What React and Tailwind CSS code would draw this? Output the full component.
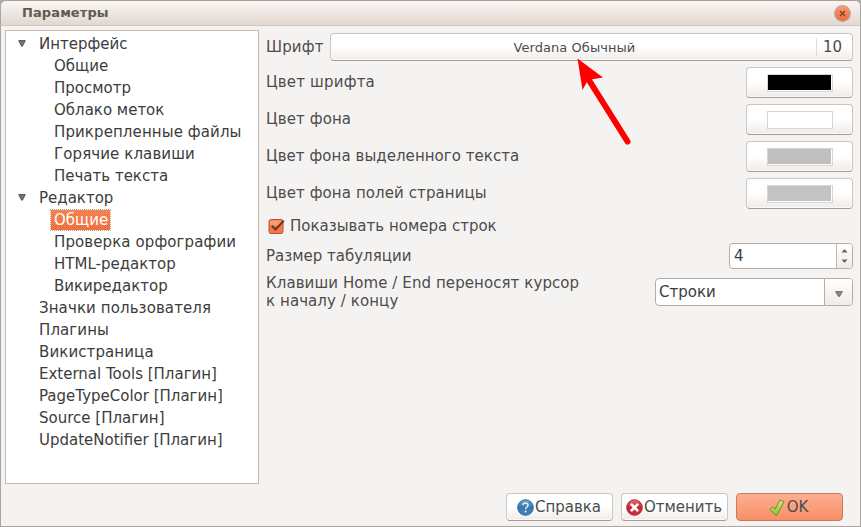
import React from 'react';

const TREE = [
  { label: 'Интерфейс', level: 0, open: true },
  { label: 'Общие', level: 1 },
  { label: 'Просмотр', level: 1 },
  { label: 'Облако меток', level: 1 },
  { label: 'Прикрепленные файлы', level: 1, wide: true },
  { label: 'Горячие клавиши', level: 1, wide: true },
  { label: 'Печать текста', level: 1 },
  { label: 'Редактор', level: 0, open: true },
  { label: 'Общие', level: 1, selected: true },
  { label: 'Проверка орфографии', level: 1, wide: true },
  { label: 'HTML-редактор', level: 1 },
  { label: 'Викиредактор', level: 1 },
  { label: 'Значки пользователя', level: 0, wide: true },
  { label: 'Плагины', level: 0, wide: true },
  { label: 'Викистраница', level: 0, wide: true },
  { label: 'External Tools [Плагин]', level: 0 },
  { label: 'PageTypeColor [Плагин]', level: 0 },
  { label: 'Source [Плагин]', level: 0 },
  { label: 'UpdateNotifier [Плагин]', level: 0 },
];

const COLORS = [
  { label: 'Цвет шрифта', fill: 'bg-black', tracking: 'tracking-[0.18px]' },
  { label: 'Цвет фона', fill: 'bg-white', tracking: 'tracking-[0.1px]' },
  { label: 'Цвет фона выделенного текста', fill: 'bg-[#c0c0c0]', tracking: 'tracking-[0.05px]' },
  { label: 'Цвет фона полей страницы', fill: 'bg-[#c3c3c3]', tracking: 'tracking-[0.09px]' },
];

const BTN =
  'rounded-[4px] border border-[#cdc6c0] border-b-[#a99c93] bg-linear-to-b from-white from-50% to-[#efebe8] shadow-[inset_0_0_0_1px_rgba(255,255,255,0.7)]';

function Triangle({ className, fill = '#777' }) {
  return (
    <svg className={className} viewBox="0 0 8 7">
      <path d="M0.7 0.6H7.3L4.4 6.2H3.6Z" fill={fill} stroke="#4a4a4a" strokeWidth="0.9" />
    </svg>
  );
}

function TreeRow({ label, level, open, selected, wide }) {
  return (
    <div className="flex h-[22px] items-center">
      <div className={`flex shrink-0 ${level ? 'w-[45px]' : 'w-[30px]'} pb-[2px] pl-[12px]`}>
        {open && <Triangle className="h-[7px] w-[8px]" />}
      </div>
      <span
        className={
          selected
            ? '-ml-px flex h-[22px] items-center border border-dotted border-[#c9a08b] bg-linear-to-b from-[#f5834f] to-[#ee7040] bg-clip-padding pl-[3px] pr-[2px] text-white'
            : `pl-[3px] text-[#3c3c3c] ${wide ? 'tracking-[0.1px]' : ''}`
        }
      >
        {label}
      </span>
    </div>
  );
}

function ColorRow({ label, fill, tracking }) {
  return (
    <div className="flex h-[31px] items-center justify-between">
      <span className={`pb-[2px] ${tracking}`}>{label}</span>
      <div className={`flex h-[31px] w-[107px] items-center justify-center ${BTN}`}>
        <div className="h-[18px] w-[66px] border border-[#dcd5ce] bg-white pb-px pr-px">
          <div className={`h-full w-full ${fill}`} />
        </div>
      </div>
    </div>
  );
}

function HelpIcon() {
  return (
    <svg className="h-[17px] w-[17px]" viewBox="0 0 17 17">
      <defs>
        <linearGradient id="help" x1="0" y1="0" x2="0" y2="1">
          <stop offset="0" stopColor="#6ea6d6" />
          <stop offset="0.5" stopColor="#3677b0" />
          <stop offset="1" stopColor="#3d86bd" />
        </linearGradient>
      </defs>
      <circle cx="8.5" cy="8.5" r="7.8" fill="url(#help)" stroke="#2a5f92" strokeWidth="0.9" />
      <path d="M6 6.1C6.1 3.4 11.1 3.4 11 6.2C10.9 8 8.6 8 8.6 10.2" fill="none" stroke="#e8f0f8" strokeWidth="1.5" />
      <circle cx="8.6" cy="12.5" r="1" fill="#e8f0f8" />
    </svg>
  );
}

function CancelIcon() {
  return (
    <svg className="h-[17px] w-[17px]" viewBox="0 0 17 17">
      <defs>
        <linearGradient id="cancel" x1="0" y1="0" x2="0" y2="1">
          <stop offset="0" stopColor="#ea6d6d" />
          <stop offset="0.5" stopColor="#cc2430" />
          <stop offset="1" stopColor="#c8304a" />
        </linearGradient>
      </defs>
      <circle cx="8.5" cy="8.5" r="7.8" fill="url(#cancel)" stroke="#ab1e2c" strokeWidth="0.9" />
      <path d="M4.9 4.9L12.1 12.1M12.1 4.9L4.9 12.1" stroke="#fff" strokeWidth="2.7" />
    </svg>
  );
}

function OkIcon() {
  return (
    <svg className="h-[17px] w-[16px]" viewBox="0 0 16 17">
      <defs>
        <linearGradient id="ok" x1="0" y1="0" x2="0" y2="1">
          <stop offset="0" stopColor="#cfe87a" />
          <stop offset="1" stopColor="#93c23a" />
        </linearGradient>
      </defs>
      <path
        d="M0.9 10.3L3.9 7.6L6.1 10.2L10.9 1L15.1 2.6L8 16H6.2Z"
        fill="url(#ok)"
        stroke="#6f8f2c"
        strokeWidth="1"
        strokeLinejoin="round"
      />
    </svg>
  );
}

export default function App() {
  return (
    <div className="relative flex h-[527px] w-[861px] flex-col overflow-hidden bg-[#a9a9a9] font-['DejaVu_Sans',sans-serif] text-[15px] leading-[18px] text-[#4c4c4c]">
      <div className="flex min-h-0 flex-1 flex-col rounded-t-[6px] border border-[#a9a6a2] border-t-[#b39c8d] bg-[#f5f3f2]">
        <header className="flex h-[25px] shrink-0 items-center justify-between rounded-t-[5px] border-b border-[#d2c5bd] bg-linear-to-b from-[#f8f6f4] to-[#e1d8d2] pl-[21px] pr-[9px]">
          <h1 className="text-[13px] font-bold tracking-[0.1px] text-[#625950]">Параметры</h1>
          <svg className="h-[17px] w-[17px]" viewBox="0 0 17 17">
            <defs>
              <linearGradient id="close" x1="0" y1="0" x2="0" y2="1">
                <stop offset="0" stopColor="#f99c78" />
                <stop offset="1" stopColor="#ee6a38" />
              </linearGradient>
            </defs>
            <circle cx="8.5" cy="8.5" r="7.8" fill="url(#close)" stroke="#c4a292" strokeWidth="1.2" />
            <path d="M6 6L11 11M11 6L6 11" stroke="#7a3f27" strokeWidth="1.2" />
          </svg>
        </header>

        <div className="flex pl-[4px] pr-[7px] pt-[4px]">
          <nav className="h-[454px] w-[254px] shrink-0 border border-[#c7bcb3] bg-white pt-[2px]">
            {TREE.map((item, i) => (
              <TreeRow key={i} {...item} />
            ))}
          </nav>

          <main className="ml-[7px] flex flex-1 flex-col pt-[3px]">
            <div className="flex h-[28px] items-center">
              <span className="w-[64px] tracking-[0.15px]">Шрифт</span>
              <div className={`flex h-[28px] flex-1 items-center ${BTN}`}>
                <span className="flex-1 pl-[2px] pt-px text-center text-[13px] tracking-[0.06px]">Verdana Обычный</span>
                <span className="flex h-[18px] items-center border-l border-[#e2dcd7] pl-[6px] pr-[10px]">10</span>
              </div>
            </div>

            <div className="mt-[6px] flex flex-col gap-[6px]">
              {COLORS.map((c) => (
                <ColorRow key={c.label} {...c} />
              ))}
            </div>

            <div className="mt-[8px] flex h-[18px] items-center">
              <svg className="ml-[2px] h-[17px] w-[18px]" viewBox="0 0 18 17">
                <rect x="1" y="1.5" width="14" height="14" rx="2" fill="#f3794a" stroke="#b9562f" />
                <rect x="2" y="2.5" width="12" height="5" rx="1" fill="#f99a73" />
                <path d="M3.8 7.8L7.5 11.4L15.7 2.8" fill="none" stroke="#6b3824" strokeWidth="2.1" />
              </svg>
              <span className="ml-[4px]">Показывать номера строк</span>
            </div>

            <div className="mt-[8px] flex h-[26px] items-center justify-between">
              <span>Размер табуляции</span>
              <div className="flex h-[26px] w-[124px] rounded-[4px] border border-[#b9aca1] bg-white text-[#3c3c3c]">
                <span className="flex flex-1 items-center pl-[4px]">4</span>
                <div className="flex w-[16px] flex-col items-center justify-center gap-[6px] rounded-r-[3px] border-l border-[#c3b8af] bg-linear-to-b from-white to-[#efebe8]">
                  <svg className="h-[4px] w-[7px]" viewBox="0 0 7 4"><path d="M0.5 3.5L3 0.5H4L6.5 3.5Z" fill="#666" /></svg>
                  <svg className="h-[4px] w-[7px]" viewBox="0 0 7 4"><path d="M0.5 0.5H6.5L4 3.5H3Z" fill="#666" /></svg>
                </div>
              </div>
            </div>

            <div className="mt-[4px] flex h-[38px] items-center justify-between">
              <span className="tracking-[0.08px]">
                Клавиши Home / End переносят курсор
                <br />к началу / концу
              </span>
              <div className="flex h-[28px] w-[198px] rounded-[4px] border border-[#b9aca1] bg-white text-[#3c3c3c]">
                <span className="flex flex-1 items-center pl-[3px]">Строки</span>
                <div className="flex w-[28px] items-center justify-center rounded-r-[3px] border-l border-[#b9aca1] bg-linear-to-b from-white to-[#efebe8] pt-[3px]">
                  <svg className="h-[6px] w-[8px]" viewBox="0 0 8 6">
                    <path d="M0.6 0.6H7.4L4.5 5.4H3.5Z" fill="#888" stroke="#666" strokeWidth="0.9" />
                  </svg>
                </div>
              </div>
            </div>
          </main>
        </div>

        <footer className="mt-[9px] flex justify-end gap-[8px] pr-[17px]">
          <div className={`flex h-[28px] w-[107px] items-center justify-center gap-px pr-px ${BTN}`}>
            <HelpIcon />
            <span>Справка</span>
          </div>
          <div className={`flex h-[28px] w-[107px] items-center justify-center gap-px pr-px ${BTN}`}>
            <CancelIcon />
            <span>Отменить</span>
          </div>
          <div className="flex h-[28px] w-[107px] items-center justify-center gap-[2px] rounded-[4px] border border-[#c17e62] bg-linear-to-b from-[#fdae92] to-[#f88f66] pr-[2px]">
            <OkIcon />
            <span>OK</span>
          </div>
        </footer>
      </div>

      <svg className="absolute left-[570px] top-[50px] h-[100px] w-[70px]" viewBox="570 50 70 100">
        <path d="M587 77L627.5 141.5" stroke="#f00" strokeWidth="6" strokeLinecap="round" />
        <path d="M577.5 58.5L603 77.5L588 80L582.5 90Z" fill="#f00" />
      </svg>
    </div>
  );
}
